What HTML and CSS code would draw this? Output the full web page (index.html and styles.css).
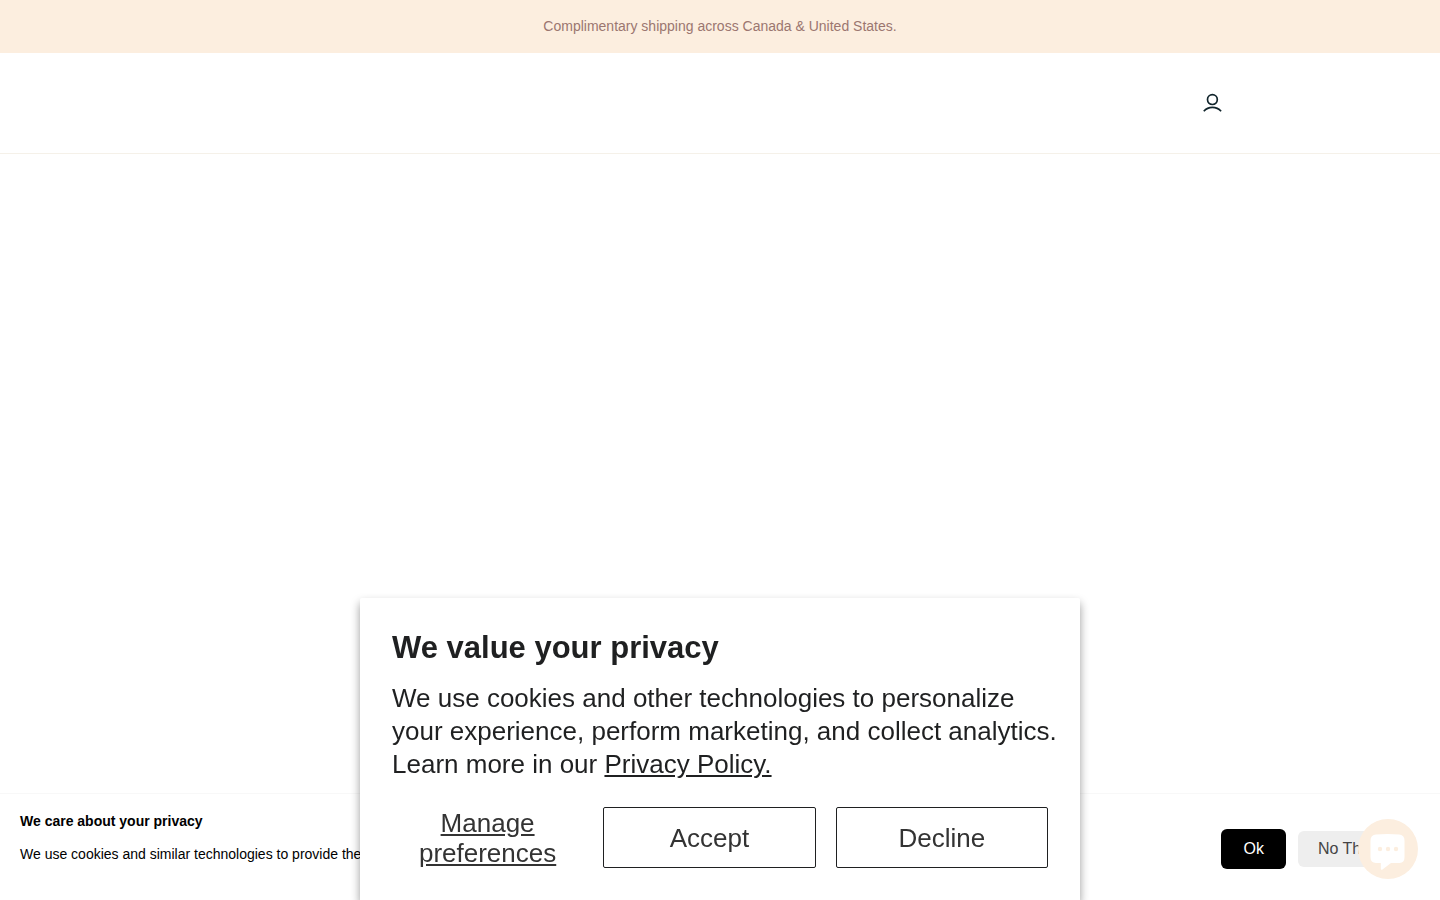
FILE: index.html
```html
<!DOCTYPE html>
<html lang="en">
<head>
    <meta charset="UTF-8">
    <meta name="viewport" content="width=device-width, initial-scale=1.0">
    <title>Shop</title>
    <link rel="stylesheet" href="styles.css">
</head>
<body>

    <div class="announcement">Complimentary shipping across Canada &amp; United States.</div>

    <header class="header">
        <a class="account" href="#" aria-label="Account">
            <svg width="24" height="24" viewBox="0 0 24 24" fill="none" stroke="#10242b" stroke-width="1.7">
                <circle cx="12.4" cy="8.6" r="4.900"/>
                <path d="M3.800 20.200c2.200-2.500 5.200-3.900 8.600-3.900s6.500 1.400 8.700 3.900"/>
            </svg>
        </a>
    </header>

    <main></main>

    <!-- Bottom cookie bar -->
    <div class="cookie-bar">
        <div class="cookie-text">
            <h3>We care about your privacy</h3>
            <p>We use cookies and similar technologies to provide the best</p>
        </div>
        <div class="cookie-buttons">
            <button type="button" class="ok">Ok</button>
            <button type="button" class="no-thanks">No Thanks</button>
        </div>
    </div>

    <!-- Privacy dialog -->
    <div class="privacy" role="dialog" aria-labelledby="privacyTitle">
        <h2 id="privacyTitle">We value your privacy</h2>
        <p>We use cookies and other technologies to personalize your experience, perform marketing, and collect analytics. Learn more in our <a href="#">Privacy Policy.</a></p>
        <div class="privacy-buttons">
            <button type="button" class="manage">Manage preferences</button>
            <button type="button">Accept</button>
            <button type="button">Decline</button>
        </div>
    </div>

    <!-- Chat launcher -->
    <button type="button" class="chat" aria-label="Chat">
        <svg width="60" height="60" viewBox="0 0 60 60">
            <path fill="#fff" d="M18 15.500Q29.500 14.500 41 15.500Q46.500 16 46.500 21.500V38.500Q46.500 43.500 41.500 44H33L24.500 50.500Q22.800 51.500 22.800 49.500V44H18Q12.500 43.500 12.500 38.500V21.500Q12.500 16 18 15.500Z"/>
            <g fill="#fceedf">
                <circle cx="22" cy="30" r="2.200"/>
                <circle cx="30" cy="30" r="2.200"/>
                <circle cx="38" cy="30" r="2.200"/>
            </g>
        </svg>
    </button>

</body>
</html>
```

FILE: styles.css
```css
* {
    box-sizing: border-box;
}

body {
    margin: 0;
    background: #fff;
    color: #000;
    font-family: "Liberation Sans", Arial, sans-serif;
}

button {
    font-family: inherit;
    cursor: pointer;
}

.announcement {
    padding: 16px;
    background: #fceedf;
    color: #9b7670;
    font-size: 14px;
    line-height: 21px;
    text-align: center;
}

.header {
    display: flex;
    justify-content: flex-end;
    padding: 38px 15%;
    border-bottom: 1px solid #f5f1e9;
}

.account,
.account svg {
    display: block;
}

/* Bottom cookie bar */
.cookie-bar {
    position: fixed;
    left: 0;
    right: 0;
    bottom: 0;
    display: flex;
    justify-content: space-between;
    align-items: center;
    padding: 15px 31px 11px 20px;
    background: #fff;
    border-top: 1px solid #f8f8f8;
}

.cookie-text {
    padding-bottom: 23px;
}

.cookie-text h3,
.cookie-text p {
    margin: 0;
    font-size: 14px;
    line-height: 24px;
}

.cookie-text h3 {
    margin-bottom: 9px;
}

.cookie-buttons {
    display: flex;
    align-items: center;
    gap: 12px;
}

.cookie-buttons button {
    border: none;
    border-radius: 6px;
    font-size: 16px;
    line-height: 20px;
}

.cookie-buttons .ok {
    padding: 10px 22px;
    background: #000;
    color: #fff;
}

.cookie-buttons .no-thanks {
    padding: 8px 14px 8px 20px;
    background: #eee;
    color: #444;
}

/* Privacy dialog */
.privacy {
    position: fixed;
    left: 50%;
    bottom: 0;
    width: 50%;
    min-width: 720px;
    transform: translateX(-50%);
    padding: 32px 20px 32px 32px;
    background: #fff;
    color: #1f2021;
    border-radius: 2px 2px 0 0;
    box-shadow: 0 5px 10px rgba(0, 0, 0, 0.4);
}

.privacy h2 {
    margin: 0 0 16px;
    font-size: 31px;
    line-height: 36px;
}

.privacy p {
    margin: 0 0 26px;
    font-size: 26px;
    line-height: 33px;
}

.privacy a {
    color: inherit;
}

.privacy-buttons {
    display: grid;
    grid-template-columns: 9fr 10fr 10fr;
    gap: 20px;
    margin-right: 12px;
}

.privacy-buttons button {
    min-height: 61px;
    padding: 0;
    background: #fff;
    color: #333;
    border: 1px solid #1f2021;
    border-radius: 2px;
    font-size: 26px;
    line-height: 30px;
}

.privacy-buttons .manage {
    border: none;
    text-decoration: underline;
}

/* Chat launcher */
.chat {
    position: fixed;
    right: 22px;
    bottom: 21px;
    width: 60px;
    height: 60px;
    padding: 0;
    border: none;
    border-radius: 50%;
    background: #fceedf;
}

.chat svg {
    display: block;
}
```
